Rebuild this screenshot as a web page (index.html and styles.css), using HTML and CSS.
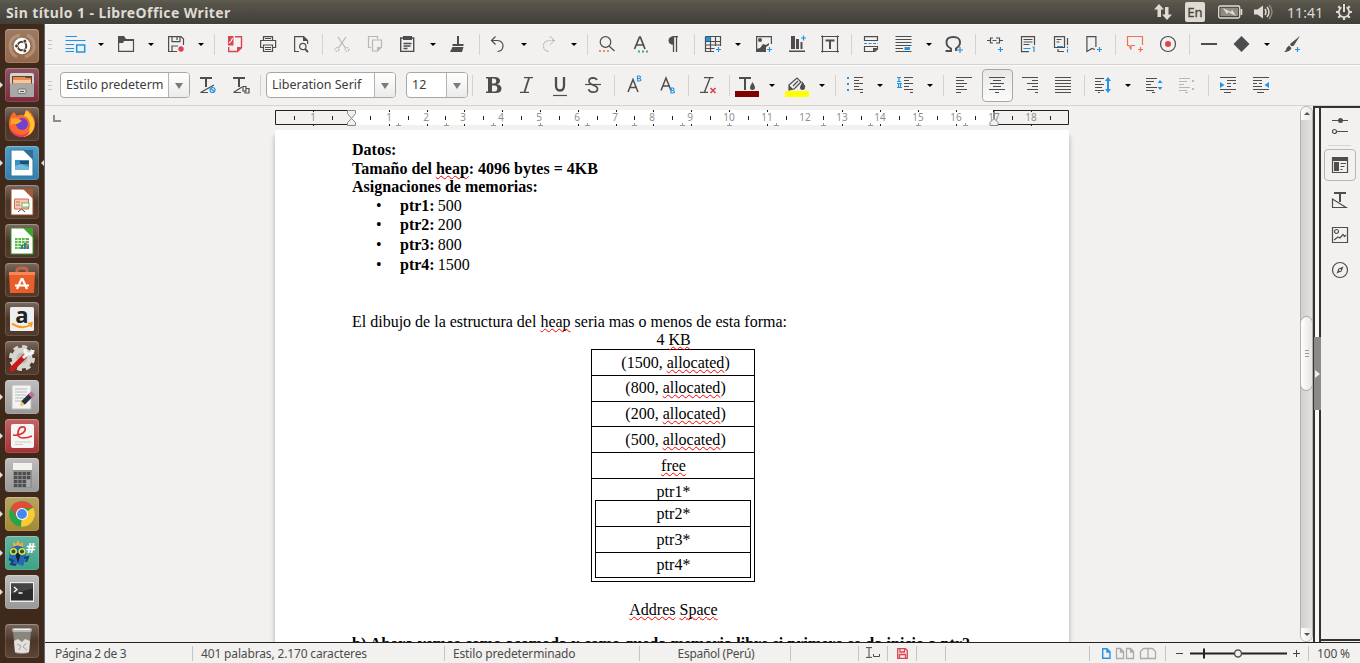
FILE: index.html
```html
<!DOCTYPE html>
<html lang="es">
<head>
<meta charset="utf-8">
<title>Sin título 1 - LibreOffice Writer</title>
<link rel="stylesheet" href="styles.css">
</head>
<body>
<header class="panel">
  <span class="title">Sin título 1 - LibreOffice Writer</span>
  <div class="tray">
    <svg class="t-net" width="18" height="16" viewBox="0 0 18 16"><path d="M5 0l5 5.500H7V13H3.500V5.500H0zM13 16l-5-5.500h3V3h3.500v7.500H18z"/></svg>
    <span class="lang">En</span>
    <svg class="t-bat" width="25" height="14" viewBox="0 0 25 14"><rect x=".7" y="1" width="21" height="12" rx="1.500" fill="none" stroke="#dfdbd2" stroke-width="1.300"/><rect x="2.500" y="3" width="17.500" height="8" fill="#8e8b82"/><path d="M22.500 4h1.800v6h-1.800z"/><path d="M5 3l8 4 1-2.500 4 6.500-8-4-1 2.500z"/></svg>
    <svg class="t-vol" width="20" height="16" viewBox="0 0 20 16"><path d="M0 5.500h3.500L9 1.500v13L3.500 10.500H0z"/><path d="M11 5q2 3 0 6M13 3q4 5 0 10" fill="none" stroke="#dfdbd2" stroke-width="1.500"/><path d="M15 1q6 7 0 14" fill="none" stroke="#8b897f" stroke-width="1.500"/></svg>
    <span class="clock">11:41</span>
    <svg class="t-gear" width="16" height="16" viewBox="0 0 16 16"><circle cx="8" cy="8" r="5.200" fill="none" stroke="#dfdbd2" stroke-width="1.800"/><path d="M0 8h3M13 8h3M2.300 2.300l2.200 2.200M13.700 2.300l-2.200 2.200M2.300 13.700l2.200-2.200M13.700 13.700l-2.200-2.200M8 13v3" stroke="#dfdbd2" stroke-width="2.200" fill="none"/><path d="M8 0v8" stroke="#4b4943" stroke-width="5" fill="none"/><path d="M8 0v8" stroke="#dfdbd2" stroke-width="2" fill="none"/></svg>
  </div>
</header>
<div class="desk">
<nav class="launcher">
  <div class="tile t-dash"><svg viewBox="0 0 34 34"><path d="M6 22Q2 9 15 6M28 12q4 12-8 16M12 28Q4 24 6 16M22 6q7 3 7 10" fill="none" stroke="#e0c9b5" stroke-width="3" opacity=".35"/><circle cx="17" cy="17" r="8.300" fill="#fff"/><circle cx="17" cy="17" r="4.300" fill="none" stroke="#51392a" stroke-width="2"/><g fill="#51392a" stroke="#fff" stroke-width=".8"><circle cx="11.500" cy="17" r="1.900"/><circle cx="19.800" cy="12.200" r="1.900"/><circle cx="19.800" cy="21.800" r="1.900"/></g></svg></div>
  <div class="tile t-files run"><svg viewBox="0 0 34 34"><rect x="5" y="5" width="24" height="24" rx="2" fill="#d5d3cf"/><path d="M7 8h20v8H7z" fill="#5c4335"/><path d="M8 9h12l1 1h5v6H8z" fill="#e88a4a"/><path d="M8 12h18v3H8z" fill="#f4c9a0"/><path d="M5 15.500h24V28q0 1-1 1H6q-1 0-1-1z" fill="#a9a8a6"/><rect x="13" y="21" width="8" height="4.500" rx="1" fill="#ddd" stroke="#777"/><path d="M15 23.500h4" stroke="#555"/></svg></div>
  <div class="tile t-plain"><svg viewBox="0 0 34 34"><path d="M4 15Q5 8 9 5l3 4q3-2 7-1l4-5q8 7 7 16-2 10-13 11Q5 29 4 18z" fill="#ff6a2a"/><path d="M21 3q10 8 8 18-3 8-11 9 8-6 7-13-1-7-6-8z" fill="#ffc52f"/><path d="M5 19q3 9 12 9 6-1 8-6-1 8-9 8Q6 29 5 19z" fill="#f2346b"/><circle cx="17" cy="17" r="6" fill="#7142cf"/><path d="M6 12q4-2 8 0l3 2-5 3q-4-1-6 1z" fill="#ffa52c"/></svg></div>
  <div class="tile t-writer run on"><svg viewBox="0 0 34 34"><path d="M6 4h13l9 9v17H6z" fill="#fff" stroke="#2879a4"/><path d="M18 4h10v10z" fill="#2f6d98"/><path d="M10 14h14v10H10z" fill="#3394c4"/><path d="M15 15h9v3h-9z" fill="#244f68"/><path d="M10 20l6-2 8 3v3H10z" fill="#72b8d7"/></svg></div>
  <div class="tile t-plain"><svg viewBox="0 0 34 34"><path d="M6 4h13l9 9v17H6z" fill="#fff" stroke="#8f4a28"/><path d="M18 4h10v10z" fill="#a55b36"/><path d="M9.500 14h14v10h-14z" fill="#f1c9b6" stroke="#cf6d48"/><path d="M11 17h4M11 20h4" stroke="#cf6d48"/><rect x="17" y="18" width="7" height="4" fill="#fff" stroke="#79ad60"/><path d="M13 27l3.500-3 3.500 3" stroke="#555" fill="none"/></svg></div>
  <div class="tile t-plain"><svg viewBox="0 0 34 34"><path d="M6 4h13l9 9v17H6z" fill="#fff" stroke="#36952c"/><path d="M18 4h10v10z" fill="#3fa52f"/><path d="M10 14h14v11H10z" fill="#5dbb3d"/><path d="M10 16.500h14M10 19.500h14M10 22.500h14M13 14v11M16.500 14v11M20 14v11" stroke="#fff" stroke-width=".8"/><path d="M17 25v-4M20 25v-6M23 25v-3" stroke="#2882a3" stroke-width="2"/><path d="M21.800 25v-7" stroke="#e55"/></svg></div>
  <div class="tile t-plain"><svg viewBox="0 0 34 34"><path d="M12 10V7q0-2 5-2t5 2v3" fill="none" stroke="#c56446" stroke-width="3"/><path d="M4 9h26l-1 21H5z" fill="#e95f2b"/><path d="M4 9h26v3H4z" fill="#f78758"/><path d="M12 26l4.500-10h1L22 26M10 22.500h14" fill="none" stroke="#fff" stroke-width="2.200"/></svg></div>
  <div class="tile t-plain"><svg viewBox="0 0 34 34"><rect x="5" y="5" width="24" height="24" rx="1.500" fill="#eee"/><text x="17" y="21" text-anchor="middle" class="amz">a</text><path d="M7 21.500q10 7 19 1" fill="none" stroke="#f79a1c" stroke-width="2"/><path d="M23 21.500l4-.5-1 4" fill="none" stroke="#f79a1c" stroke-width="1.500"/></svg></div>
  <div class="tile t-plain"><svg viewBox="0 0 34 34"><circle cx="17" cy="17" r="8" fill="#bdbab6" stroke="#d7d5d2" stroke-width="5"/><circle cx="17" cy="17" r="11.500" fill="none" stroke="#d7d5d2" stroke-width="3" stroke-dasharray="5 4"/><path d="M7 28L19 16" stroke="#c81818" stroke-width="5" stroke-linecap="round"/><path d="M18 17l5-5M20 8q0 5 3 5 5 0 5-4" fill="none" stroke="#f4f4f4" stroke-width="3"/></svg></div>
  <div class="tile t-gray run"><svg viewBox="0 0 34 34"><rect x="7" y="5" width="19" height="24" fill="#f3f3f1" stroke="#bbb"/><path d="M10 9h12M10 12h12M10 15h11M10 18h9M10 21h7" stroke="#bbb"/><path d="M18 23l8-8" stroke="#283040" stroke-width="5"/><path d="M15 26l1-5 4 4z" fill="#e8cc50"/><path d="M25 16l3-3" stroke="#c66ba0" stroke-width="5"/></svg></div>
  <div class="tile t-red run"><svg viewBox="0 0 34 34"><rect x="6" y="5" width="23" height="24" rx="2" fill="#f7f5f3"/><path d="M8 16q5 1 10-2 4-4 1-6-5-1-6 5-1 6 5 6 5 0 9-2" fill="none" stroke="#d8313a" stroke-width="1.700"/><path d="M10 23h16M10 25.500h8" stroke="#ccc"/></svg></div>
  <div class="tile t-gray run"><svg viewBox="0 0 34 34"><rect x="8" y="5" width="19" height="25" rx="1" fill="#8f8f8f"/><rect x="8" y="5" width="19" height="7" fill="#f2f2ef"/><path d="M9 15.500h17M9 19.500h17M9 23.500h17M9 27.500h17" stroke="#4c4c4c" stroke-width="2.800" stroke-dasharray="3.300 1"/><path d="M21.500 22h4v7h-4z" fill="#aaa"/></svg></div>
  <div class="tile t-gold run"><svg viewBox="0 0 34 34"><circle cx="17" cy="17" r="12.800" fill="#2ba24c"/><path d="M17 17l11.100-6.400A12.800 12.800 0 0 1 16 29.800z" fill="#fbcb35"/><path d="M5.900 10.600A12.800 12.800 0 0 1 28.100 10.600L28.300 11H17L12 20z" fill="#e14b3b"/><circle cx="17" cy="17" r="6" fill="#fff"/><circle cx="17" cy="17" r="4.900" fill="#4688ef"/></svg></div>
  <div class="tile t-teal run"><svg viewBox="0 0 34 34"><path d="M8 6l3 2 2-4 2 4 3-2v5H8z" fill="#e9ae42"/><path d="M5 13q8-7 15 0l1 8-3 9-5-2-5 2-1-5-3-2z" fill="#236bb7"/><path d="M4 23l4 2-2 3 5 1M19 22l4-1-2 5" fill="none" stroke="#173d77" stroke-width="2"/><path d="M10 17h6l-3 10z" fill="#151f2a"/><circle cx="8.500" cy="15.500" r="2.800" fill="#294f35" stroke="#dde13d" stroke-width="1.500"/><circle cx="17" cy="15.500" r="2.800" fill="#294f35" stroke="#dde13d" stroke-width="1.500"/><text x="21" y="17" class="hash">#</text></svg></div>
  <div class="tile t-gray run"><svg viewBox="0 0 34 34"><rect x="5" y="7" width="24" height="20" fill="#ececec"/><rect x="6" y="8.500" width="22" height="17" fill="#2b2b2b"/><path d="M6 8.500h22v5L6 19z" fill="#454545"/><path d="M9 12l3 2.500L9 17M13.500 18h4" fill="none" stroke="#fff" stroke-width="1.300"/></svg></div>
  <div class="tile t-trash"><svg viewBox="0 0 34 34"><path d="M8 7L26 7L24 29Q17 31 10 29Z" fill="#8b857f"/><path d="M9 17L13 15L17 18L20 15L25 17L24 28Q17 30 10 28Z" fill="#e2e1de"/><path d="M12 20L16 22L14 26M21 19L18 23L22 26" stroke="#a5a29e" fill="none"/><rect x="7" y="4" width="20" height="4" rx="2" fill="#b9b7b3"/><path d="M9 5.500h16" stroke="#eee"/></svg></div>
</nav>
<main class="app">
<div class="bar bar-1">
  <i class="grip"></i>
  <b class="btn drop wide"><svg class="ic" viewBox="0 0 16 16"><path class="b" d="M-2.500.500H9M-2.500 4.500h20M-2.500 8.500H6M-2.500 12.500H6M-2.500 15.500H6"/><rect class="b" x="8.700" y="9" width="8" height="7" stroke-width="1.500"/></svg></b>
  <b class="btn drop"><svg class="ic" viewBox="0 0 16 16"><path class="f" d="M0 0h6l2 3h8v2H6L5 7H0z"/><path class="k" d="M.600 4v11.400h14.900V3.600"/></svg></b>
  <b class="btn drop"><svg class="ic" viewBox="0 0 16 16"><path class="k" d="M9 15.500H.600V.600H13l2.500 2.500V9M4 .600v5h8v-5M9 1v3M4 15V10h6"/><circle cx="13" cy="13" r="2.700" fill="#da4453"/></svg></b>
  <i class="sep s9"></i>
  <b class="btn"><svg class="ic" viewBox="0 0 16 16"><path fill="none" stroke="#da4453" stroke-width="1.400" d="M8 .700h6.500v11l-4 3.800H1.700V11"/><path fill="#da4453" d="M1 0h5.500v9.500H1z"/><path fill="#da4453" d="M10 16v-5h5z"/><path d="M2 7Q5 5 5.500 2" fill="none" stroke="#fff"/></svg></b>
  <b class="btn"><svg class="ic" viewBox="0 0 16 16"><path class="k" d="M3.500 4V.600h9V4M3 11.500H.600v-7h15v7H13M5 2.500h6M3.500 9h9v6.500h-9zM5 11.500h6M5 13.500h6"/></svg></b>
  <b class="btn"><svg class="ic" viewBox="0 0 16 16"><path class="k" d="M6 15.500H1.600V.600h9l4 4V8"/><path class="f" d="M10 0v5h5z"/><circle class="k" cx="9.800" cy="10.500" r="3.200"/><path class="k" d="M12 13l3 3" stroke-width="1.800"/></svg></b>
  <i class="sep"></i>
  <b class="btn dim"><svg class="ic" viewBox="0 0 16 16"><path class="k" d="M4 1l7.500 11M12 1L4.500 12"/><circle class="k" cx="3" cy="13.500" r="1.900" stroke-dasharray="1.500 1"/><circle class="k" cx="13" cy="13.500" r="1.900" stroke-dasharray="1.500 1"/></svg></b>
  <b class="btn dim"><svg class="ic" viewBox="0 0 16 16"><path class="k" d="M4 11.500H1.500v-11h9V3M5.500 4h9v7l-4 4h-5z"/><path class="f" d="M10 16v-5h5z"/></svg></b>
  <b class="btn drop"><svg class="ic" viewBox="0 0 16 16"><path class="k" d="M.700 2h13v13.400H.700zM3.500 7.500h8M3.500 10h7M3.500 12.500h4" stroke-width="1.400"/><path class="f" d="M3 0h9v4H3z"/></svg></b>
  <b class="btn"><svg class="ic" viewBox="0 0 16 16"><path class="f" d="M7 0h2v8h4.500v2h-11V8H7zM2.500 11h11L12 16H0z"/></svg></b>
  <i class="sep"></i>
  <b class="btn drop"><svg class="ic" viewBox="0 0 16 16"><path class="k" d="M4.500.500L.500 4.500l4 4M1 4.500h5.500q5.500.500 5.500 5.500 0 5-5.500 5.500"/></svg></b>
  <b class="btn drop dim"><svg class="ic" viewBox="0 0 16 16"><path class="k" d="M9 .500l4.500 4L9 8.500M13 4.500H8Q2.500 5 2.500 10q0 5 5.500 5.500" stroke-dasharray="2 .800"/></svg></b>
  <i class="sep"></i>
  <b class="btn"><svg class="ic" viewBox="0 0 16 16"><circle class="k" cx="6.500" cy="6" r="5.300"/><path class="k" d="M10 10l5.500 5"/><path d="M0 15H11" stroke="#ef8b70" stroke-width="2" stroke-dasharray="2 2"/></svg></b>
  <b class="btn"><svg class="ic" viewBox="0 0 16 16"><path class="k" d="M2.500 13L7.500 1h.800L13 13M4.500 9h7" stroke-width="1.700"/><path d="M6 15.500h10" stroke="#3fae70" stroke-width="2" stroke-dasharray="2 2"/></svg></b>
  <b class="btn"><svg class="ic" viewBox="0 0 16 16"><path class="f" d="M9 0v9Q3.500 8.500 3.500 4.500T9 0z"/><path class="k" d="M8.500 0v16M11.500 0v16M8 .600h5" stroke-width="1.300"/></svg></b>
  <i class="sep s7"></i>
  <b class="btn drop w51"><svg class="ic" viewBox="0 0 16 16"><path class="k" d="M.500.500h15V10M.500.500v15H9M.500 5.500h15M.500 9h15M.500 12.500h9M5.500.500v15M10.500.500V10"/><path class="bf" d="M1 1h4.500v4H1z"/><path class="b" d="M13.500 11v5M11 13.500h5"/></svg></b>
  <b class="btn"><svg class="ic" viewBox="0 0 16 16"><path class="k" d="M.600 0v15.400H9M0 .600h15.400V8"/><circle class="f" cx="4" cy="4" r="2"/><path class="f" d="M0 16v-3l4-1 3-4 3 1 3-2v2l-3 2v5z"/><path class="b" d="M13.500 11v5M11 13.500h5"/></svg></b>
  <b class="btn"><svg class="ic" viewBox="0 0 16 16"><path class="f" d="M2 0h4v13H2zM7 3h3v10H7zM11.500 6h2v7h-2zM0 14.500h16V16H0z"/><path class="b" d="M14.500-.500v5M12 2h5"/></svg></b>
  <b class="btn"><svg class="ic" viewBox="0 0 16 16"><path class="k" d="M.500-.500v17M15.500-.500v17M-1 .500h18M-1 15.500h18"/><path class="f" d="M3.500 3.500h9v2H9V13H7V5.500H3.500z"/></svg></b>
  <i class="sep"></i>
  <b class="btn"><svg class="ic" viewBox="0 0 16 16"><path class="k" d="M1.500 0v4.500h13V0M1 .600h14M1.500 16v-5.500h13V13l-2.500 2.500H1.500"/><path class="f" d="M10 16v-4h5z"/><path class="b" d="M1 7.500h14" stroke-dasharray="3 1.500"/></svg></b>
  <b class="btn drop"><svg class="ic" viewBox="0 0 16 16"><path class="k" d="M-.5.500h16M-.5 3.500h16M-.5 6.500h16M-.5 9.500h16M-.5 12.500H7M-.5 15.500h16"/><path class="bf" d="M8.500 11H14v3H8.500z"/></svg></b>
  <b class="btn"><svg class="ic" viewBox="0 0 16 16"><path class="k" d="M-.5 15H5v-2.500Q.500 10.500.500 6.500.500 1 7.300 1T14 6.500Q14 10 10 12.500V15" stroke-width="1.900"/><path class="b" d="M14 11v6M11 14h6"/></svg></b>
  <i class="sep"></i>
  <b class="btn"><svg class="ic" viewBox="0 0 16 16"><path class="k" d="M0 4.500h4M12 4.500h4M6 2H3.500v5H6M9 2h3.500v5H9M5.500 4.500h4"/><path class="b" d="M13.500 11v5M11 13.500h5"/></svg></b>
  <b class="btn"><svg class="ic" viewBox="0 0 16 16"><path class="k" d="M14.500 9V.600h-13v15H9M3.500 3.500h9M3.500 6h9M3.500 8.500h6"/><path class="b" d="M3.500 12.500h7M12.500 11h1.500v5"/></svg></b>
  <b class="btn"><svg class="ic" viewBox="0 0 16 16"><path class="k" d="M11.500 11.500h-10V.600h10zM3.500 3.500h5M3.500 6h3M14.500 2v7M5 13v2.500h6"/><path class="b" d="M4 10.500h6M14.500 10.500v1.500M14.500 13v3.500"/></svg></b>
  <b class="btn"><svg class="ic" viewBox="0 0 16 16"><path class="k" d="M9 13.500L6 12.500.900 15.500V.600h9V11"/><path class="b" d="M13.500 11v5M11 13.500h5"/></svg></b>
  <i class="sep"></i>
  <b class="btn"><svg class="ic" viewBox="0 0 16 16"><path class="o" d="M8 9.500H4v4L2 9.500H.500v-9h15V9"/><path class="o" d="M13.500 11v5M11 13.500h5"/></svg></b>
  <b class="btn"><svg class="ic" viewBox="0 0 16 16"><circle class="k" cx="8" cy="8" r="7.500"/><circle cx="8" cy="8" r="3" fill="#da4453"/></svg></b>
  <i class="sep"></i>
  <b class="btn"><svg class="ic" viewBox="0 0 16 16"><path class="f" d="M0 7h16v2H0z"/></svg></b>
  <b class="btn drop"><svg class="ic" viewBox="0 0 16 16"><path class="f" d="M7.500 0l8 8-8 8-8-8z"/></svg></b>
  <b class="btn"><svg class="ic" viewBox="0 0 16 16"><path class="f" d="M16 0L9.500 10H7L6 8zM5 9.500l2.500 2.500Q6 16 0 16q3-2 2.500-4z"/><path class="b" d="M13.500 11v5M11 13.500h5"/></svg></b>
</div>
<div class="bar bar-2">
  <i class="grip"></i>
  <div class="combo c-style"><span>Estilo predeterm</span><i></i></div>
  <b class="btn"><svg class="ic" viewBox="0 0 16 16"><path class="f" d="M1 0h12v2H8v8H6V2H1z"/><path class="k" d="M1.500 15.500L15 8M1.500 15.500H9"/><circle class="b" cx="13.500" cy="13" r="2.500"/><path class="b" d="M12 11.500l3 3"/></svg></b>
  <b class="btn"><svg class="ic" viewBox="0 0 16 16"><path class="f" d="M1 0h12v2H8v8H6V2H1z"/><path class="k" d="M1.500 15.500L10 10M1.500 15.500H9M11 9.500h3V14h-3zM14 11.500h3V16h-4v-2"/></svg></b>
  <i class="sep g2"></i>
  <div class="combo c-font"><span>Liberation Serif</span><i></i></div>
  <div class="combo c-size"><span>12</span><i></i></div>
  <i class="sep g3"></i>
  <b class="btn"><svg class="ic" viewBox="0 0 16 16"><path class="f" fill-rule="evenodd" d="M0 0h8.500q5.500.300 5.500 3.800Q14 6.500 11 7.300q4.500.700 4.500 4.200Q15.500 16 9.500 16H0v-1.500h2V1.500H0zM6 1.500v5h2q2.300 0 2.300-2.500T8 1.500zM6 8.500v6h2.500q2.800 0 2.800-3t-2.800-3z"/></svg></b>
  <b class="btn"><svg class="ic" viewBox="0 0 16 16"><path class="k" d="M5 .600h9M1 15.400h9"/><path class="k" d="M10 1L5.500 15" stroke-width="1.800"/></svg></b>
  <b class="btn"><svg class="ic" viewBox="0 0 16 16"><path class="k" d="M4 0v8.500q0 5 4 5t4-5V0" stroke-width="2.300"/><path class="k" d="M1 18.500h14"/></svg></b>
  <b class="btn"><svg class="ic" viewBox="0 0 16 16"><path class="k" d="M12 3Q11 .800 8 .800q-4 .200-4 3.200 0 2.500 4 4 4.500 1.500 4.500 4 0 3-4.500 3.200-3.500 0-4.500-3" stroke-width="1.700"/><path class="k" d="M0 7.500h16"/></svg></b>
  <i class="sep"></i>
  <b class="btn"><svg class="ic" viewBox="0 0 16 16"><path class="k" d="M2 15L7 2.500 12 15M3.500 10.500h7" stroke-width="1.500"/><path class="b" d="M11.500 1.500V-1h2q2 1 0 2.500h-2V4h2q3-1 0-2.500"/></svg></b>
  <b class="btn"><svg class="ic" viewBox="0 0 16 16"><path class="k" d="M2 13.500L7 1l5 12.500M3.500 9h7" stroke-width="1.500"/><path class="b" d="M12 13.500V11h2q2 1 0 2.500h-2V16h2q3-1 0-2.500"/></svg></b>
  <i class="sep"></i>
  <b class="btn"><svg class="ic" viewBox="0 0 16 16"><path class="k" d="M4 .600h9.500M0 15.400h8M10 1L4.500 15" stroke-width="1.400"/><path d="M10.500 11l5 5M15.500 11l-5 5" stroke="#da4453" stroke-width="1.700"/></svg></b>
  <i class="sep s6"></i>
  <b class="btn drop"><svg class="ic" viewBox="0 0 16 16"><path class="f" d="M0 0h12v2H7v11H5V2H0zM13.500 5q5 8 0 8t0-8z"/><path d="M-4 14h24v6H-4z" fill="#800000"/></svg></b>
  <b class="btn drop"><svg class="ic" viewBox="0 0 16 16"><path class="k" d="M0 8l8-7 4 4-7 7-5 1zM4 9l5-5M6 11l5-5M13 5l3 5"/><path class="f" d="M13.500 5q5 8 0 8t0-8zM0 12v-4l4 4z"/><path d="M-4 14h24v6H-4z" fill="#ff0"/></svg></b>
  <i class="sep"></i>
  <b class="btn drop"><svg class="ic" viewBox="0 0 16 16"><path class="bf" d="M0 0h2v2H0zM0 6h2v2H0zM0 12h2v2H0z"/><path class="k" d="M7 .500h9M7 3.500h5M7 6.500h9M7 9.500h5M7 12.500h9M13 15.500h3"/></svg></b>
  <b class="btn drop"><svg class="ic" viewBox="0 0 16 16"><path class="b" d="M0 .500h4M0 4.500h4M2 0v4M0 6.500h5M0 10.500h5M1.500 6v4M3.500 6v4"/><path class="k" d="M7 .500h9M7 3.500h5M7 6.500h9M7 9.500h5M7 12.500h9M13 15.500h3"/></svg></b>
  <i class="sep s9"></i>
  <b class="btn"><svg class="ic" viewBox="0 0 16 16"><path class="k" d="M0 .500h16M0 3.500h8M0 6.500h11M0 9.500h8M0 12.500h11M0 15.500h5"/></svg></b>
  <b class="btn on"><svg class="ic" viewBox="0 0 16 16"><path class="k" d="M0 .500h16M4 3.500h8M1 6.500h14M4 9.500h8M0 12.500h16M6 15.500h4"/></svg></b>
  <b class="btn"><svg class="ic" viewBox="0 0 16 16"><path class="k" d="M0 .500h16M10 3.500h6M5 6.500h11M10 9.500h6M5 12.500h11M13 15.500h3"/></svg></b>
  <b class="btn"><svg class="ic" viewBox="0 0 16 16"><path class="k" d="M0 .500h16M0 3.500h16M0 6.500h16M0 9.500h16M0 12.500h16M0 15.500h16"/></svg></b>
  <i class="sep s7"></i>
  <b class="btn drop w51"><svg class="ic" viewBox="0 0 16 16"><path class="k" d="M0 1.500h9M0 4.500h6M0 7.500h9M0 10.500h7M0 13.500h9M3 15.500h2"/><path class="b" d="M13 3v10" stroke-width="2"/><path class="bf" d="M10 4l3-4 3 4zM10 12l3 4 3-4z"/></svg></b>
  <b class="btn"><svg class="ic" viewBox="0 0 16 16"><path class="k" d="M0 1.500h11M0 4.500h8M0 7.500h5M0 10.500h11M0 13.500h8M6 15.500h3"/><path class="bf" d="M11.500 6l2.500-3 2.500 3zM11.500 10l2.500 3 2.500-3z"/></svg></b>
  <b class="btn dim"><svg class="ic" viewBox="0 0 16 16"><path class="k" d="M0 1.500h11M0 4.500h8M0 7.500h5M0 10.500h11M0 13.500h8M6 15.500h3"/><path class="f" d="M13 3h2v2h-2zM13 11h2v2h-2z"/></svg></b>
  <i class="sep"></i>
  <b class="btn"><svg class="ic" viewBox="0 0 16 16"><path class="k" d="M0 .500h16M7 3.500h9M7 6.500h4M13 6.500h3M7 9.500h4M0 12.500h16M4 15.500h7"/><path class="bf" d="M0 5l4.500 3L0 11z"/></svg></b>
  <b class="btn"><svg class="ic" viewBox="0 0 16 16"><path class="k" d="M0 .500h16M0 3.500h9M0 6.500h4M6 6.500h3M0 9.500h9M0 12.500h16M4 15.500h7"/><path class="bf" d="M16 5l-4.500 3 4.500 3z"/></svg></b>
</div>
<div class="work">
  <section class="doc">
    <div class="ruler">
      <svg class="tabsel" width="8" height="8" viewBox="0 0 8 8"><path d="M1 1v6h7" fill="none" stroke="#8c8c8c" stroke-width="2"/></svg>
      <svg class="scale" width="796" height="24" viewBox="0 0 796 24">
        <rect x="76" y="4" width="643" height="15" fill="#fff"/>
        <path d="M76 4.500H.500v14H76M719 18.500V4.500h74.500v14H719" fill="none" stroke="#222"/>
        <g fill="none" stroke="#222" shape-rendering="crispEdges">
          <path d="M19.200 11.500H790" stroke-width="4" stroke-dasharray="1 36.800"/>
          <path d="M38.100 5H790M38.100 19H790" stroke-width="2" stroke-dasharray="1 36.800"/>
        </g>
        <g fill="none" stroke="#999" shape-rendering="crispEdges"><path d="M123.300 18H700" stroke-width="3" stroke-dasharray="1 46.200"/><path d="M121.300 19.500H700" stroke-dasharray="5 42.200"/></g>
        <g class="nums">
          <text x="38">1</text><text x="114">1</text><text x="151">2</text><text x="188">3</text><text x="226">4</text><text x="264">5</text><text x="302">6</text><text x="340">7</text><text x="377">8</text><text x="415">9</text><text x="454">10</text><text x="492">11</text><text x="530">12</text><text x="567">13</text><text x="605">14</text><text x="643">15</text><text x="681">16</text><text x="719">17</text><text x="756">18</text>
        </g>
        <g fill="#f2f1f0" stroke="#888"><path d="M72.500 4.500h8v3l-4 5-4-5zM76.500 12.500l4 4v3h-8v-3zM719 12.500l4 4v3h-8v-3z"/></g>
      </svg>
    </div>
    <article class="page">
      <p class="h19"><b>Datos:</b></p>
      <p><b>Tamaño del <u>heap</u>: 4096 bytes = 4KB</b></p>
      <p class="h19"><b>Asignaciones de memorias:</b></p>
      <ul>
        <li class="h19"><b>ptr1:</b> 500</li>
        <li><b>ptr2:</b> 200</li>
        <li><b>ptr3:</b> 800</li>
        <li><b>ptr4:</b> 1500</li>
      </ul>
      <p class="intro">El dibujo de la estructura del <u>heap</u> seria mas o menos de esta forma:</p>
      <p class="center">4 <u>KB</u></p>
      <div class="heap">
        <div class="cell in">(1500, <u>allocated</u>)</div>
        <div class="cell in high">(800, <u>allocated</u>)</div>
        <div class="cell in short">(200, <u>allocated</u>)</div>
        <div class="cell in">(500, <u>allocated</u>)</div>
        <div class="cell"><u>free</u></div>
        <div class="cell last">ptr1*
          <div class="inner">
            <div class="cell">ptr2*</div>
            <div class="cell">ptr3*</div>
            <div class="cell short">ptr4*</div>
          </div>
        </div>
      </div>
      <p class="center foot"><u>Addres</u> <u>Space</u></p>
      <p class="next"><b>b) Ahora vemos como acomoda y como queda memoria libre si primero se da inicio a ptr?</b></p>
    </article>
  </section>
  <div class="scroll"><i class="up"></i><i class="thumb"></i><i class="down"></i></div>
  <div class="split"><i></i></div>
  <aside class="side">
    <svg class="ic set" viewBox="0 0 16 16"><path class="k" d="M0 2.500h16M5 13.500h11"/><circle class="f" cx="8.500" cy="2.500" r="2.500"/><circle class="k" cx="2.500" cy="13.500" r="2"/></svg>
    <hr>
    <div class="deck on"><svg class="ic" viewBox="0 0 16 16"><path class="k" d="M.500.500h15v15H.500zM8.500 6.500H14M8.500 9.500h4M8.500 12.500h2"/><path class="f" d="M0 0h16v4H0zM2 5h5v9H2z"/></svg></div>
    <div class="deck"><svg class="ic" viewBox="0 0 16 16"><path class="f" d="M2 0h12v2H9v8H7V2H2z"/><path class="k" d="M.500 7v8.500H14z"/></svg></div>
    <div class="deck"><svg class="ic" viewBox="0 0 16 16"><path class="k" d="M.500.500h15v15H.500zM2 13l4-3 2 1 3-3.500 1.500 2L14 8"/><circle class="k" cx="4.500" cy="4.500" r="2"/></svg></div>
    <div class="deck"><svg class="ic" viewBox="0 0 16 16"><circle class="k" cx="8" cy="8" r="7.500"/><path class="f" d="M11.500 4.500l-2 5-5 2 2-5z"/><circle cx="8" cy="8" r="1" fill="#f2f1f0"/></svg></div>
  </aside>
</div>
<footer class="status">
  <span class="s-page">Página 2 de 3</span>
  <span class="s-words">401 palabras, 2.170 caracteres</span>
  <span class="s-style">Estilo predeterminado</span>
  <span class="mid s-lang">Español (Perú)</span>
  <span></span>
  <span class="mid"><svg width="16" height="12" viewBox="0 0 16 12"><path class="k" d="M1 .600h6M1 10.400h6M4 .600v10M8.500 7v2.500h6V7"/></svg></span>
  <span class="mid"><svg width="11" height="11" viewBox="0 0 11 11"><path d="M.700.700h7.800l1.800 1.800v7.800H.700zM3 1v3h4.500V1M2.500 10V6.500h6V10" fill="none" stroke="#da4453" stroke-width="1.300"/></svg></span>
  <span></span>
  <span></span>
  <span class="s-view"><svg width="56" height="11" viewBox="0 0 56 11"><path d="M.700.700H5l3 3v6.600H.700zM5 1v3h3" fill="none" stroke="#1e95ea" stroke-width="1.400"/><path d="M14.500.500h4l3 3v7h-7zM18.500 1v3h3M24.500.500h4l3 3v7h-7zM28.500 1v3h3M38.500 10.500v-7l3-3h4.500v10zM46 10.500V.500h4.500l3 3v7z" fill="none" stroke="#aaa" stroke-width="1.300"/></svg></span>
  <span class="s-zoom"><svg width="126" height="11" viewBox="0 0 126 11"><path d="M0 5.500h7M117 5.500h7M120.500 2v7" stroke="#444"/><path d="M14 5.500h97M28 .500v10" stroke="#222" stroke-width="2"/><circle cx="62" cy="5.500" r="3.500" fill="#f2f1f0" stroke="#555" stroke-width="1.500"/></svg></span>
  <span class="s-pct">100 %</span>
</footer>
</main>
</div>
</body>
</html>
```
FILE: styles.css
```css
* { box-sizing: border-box; }
body { margin: 0; width: 1360px; height: 663px; overflow: hidden; display: flex; flex-direction: column; background: #f2f1f0; font: 12.5px "Noto Sans", "Open Sans", sans-serif; color: #4c4c4c; }
i { font-style: normal; display: block; }
svg { display: block; overflow: visible; }

/* top panel */
.panel { height: 24px; flex: none; display: flex; justify-content: space-between; align-items: center; padding: 0 8px 0 6px; background: linear-gradient(#5f5c4f, #57544b 15%, #3f3e39); color: #dfdbd2; }
.title { font-weight: 700; font-size: 14px; letter-spacing: .4px; }
.tray { display: flex; align-items: center; }
.tray svg { fill: #dfdbd2; }
.lang { width: 20px; height: 20px; margin: 0 13px; border-radius: 2px; background: #dfdbd2; color: #47453f; font-size: 13px; line-height: 20px; text-align: center; -webkit-text-stroke: .3px #47453f; }
.t-vol { margin: 0 13px 0 11px; }
.clock { width: 36px; font-size: 14px; letter-spacing: .1px; margin-right: 13px; }

/* launcher */
.desk { display: flex; flex: 1; min-height: 0; }
.launcher { width: 45px; flex: none; display: flex; flex-direction: column; gap: 5px; padding: 5px; background: #3f291a; border-right: 1px solid #646b76; }
.tile { width: 34px; height: 34px; flex: none; position: relative; border-radius: 4px; box-shadow: inset 0 0 0 1px #ffffff20, inset 0 1px 1px #ffffff30; }
.tile svg { width: 34px; height: 34px; }
.t-dash { background: linear-gradient(#9c7a62, #95684a); }
.t-files { background: linear-gradient(#8d5560, #7c2b3c); }
.t-plain { background: linear-gradient(#7b6a60, #4d3526 50%, #523b2d); }
.t-writer { background: linear-gradient(#539bc0, #347fab); }
.t-gray { background: linear-gradient(#bebebe, #989898); }
.t-red { background: linear-gradient(#c26464, #a43236); }
.t-gold { background: linear-gradient(#b8a565, #a4892f); }
.t-teal { background: linear-gradient(#63b49d, #3da387); }
.t-trash { margin-top: 10px; background: linear-gradient(#75655b, #4d3526 50%, #5c4537); }
.run::before, .on.tile::after { content: ""; position: absolute; top: 14px; border: 3px solid transparent; }
.run::before { left: -5px; border-left-color: #ddd; border-right: 0; }
.on.tile::after { right: -5px; border-right-color: #ddd; border-left: 0; }
.amz { font: 700 22px "Open Sans", sans-serif; fill: #222; }
.hash { font: 700 15px "Open Sans", sans-serif; fill: #fff; }

/* toolbars */
.app { flex: 1; display: flex; flex-direction: column; min-width: 0; }
.bar { height: 41px; flex: none; display: flex; align-items: center; border-bottom: 1px solid #d5d3d1; box-shadow: inset 0 1px #fafafa; }
.grip { width: 4px; height: 9px; margin: 0 8px 0 3px; background: repeating-linear-gradient(#c6c4c2 0 1px, transparent 1px 4px); }
.btn { width: 33px; height: 33px; flex: none; padding-left: 8px; display: flex; align-items: center; position: relative; }
.drop { width: 50px; }
.w51 { width: 51px; }
.drop::after { content: ""; margin-left: 14px; border: 3px solid transparent; border-top-color: #000; border-bottom: 0; }
.ic { width: 16px; height: 16px; flex: none; stroke-width: 1.2; }
.k { fill: none; stroke: #4d4d4d; }
.f { fill: #4d4d4d; }
.b { fill: none; stroke: #1e95ea; }
.bf { fill: #1e95ea; }
.o { fill: none; stroke: #f0704f; }
.dim .ic { opacity: .35; }
.sep { width: 8px; height: 21px; flex: none; background: linear-gradient(#d4d2d0, #d4d2d0) 4px 0 / 1px 100% no-repeat; }
.s9 { width: 9px; }
.s7 { width: 7px; }
.s6 { width: 6px; }
.btn.on::before { content: ""; position: absolute; inset: 0 1px; z-index: 0; border: 1px solid #aaa7a3; border-radius: 4px; background: linear-gradient(#e9e8e7, #fbfbfb); }
.btn.on .ic { position: relative; }
.combo { height: 26px; flex: none; display: flex; border: 1px solid #aaa7a2; border-radius: 4px; background: #fff; color: #3c3c3c; overflow: hidden; }
.combo span { flex: 1; padding-left: 5px; line-height: 24px; white-space: nowrap; overflow: hidden; }
.combo i { width: 21px; border-left: 1px solid #b7b4b0; background: linear-gradient(#fff, #ecebea); display: flex; align-items: center; justify-content: center; }
.combo i::after { content: ""; border: 4px solid transparent; border-top: 6px solid #7b7b7b; border-bottom: 0; margin-top: 2px; }
.c-style { width: 130px; margin-right: 1px; }
.c-font { width: 130px; margin-right: 10px; }
.c-size { width: 62px; }
.sep.g2 { margin-left: -1px; width: 10px; }
.sep.g3 { width: 10px; }

/* document area */
.work { height: 536px; flex: none; display: flex; }
.doc { width: 1255px; flex: none; overflow: hidden; }
.ruler { height: 24px; display: flex; padding-left: 8px; }
.tabsel { margin: 8px 214px 0 0; }
.nums text { font: 10px "Noto Sans", sans-serif; fill: #8f8f8f; text-anchor: middle; transform: translateY(15px); }
.page { width: 794px; height: 512px; margin-left: 230px; padding: 11px 76px 0 77px; background: #fff; box-shadow: 0 6px 5px #00000048; color: #000; font: 16px/18px "Liberation Serif", serif; }
.page p { margin: 0; height: 18px; white-space: nowrap; }
.page .h19 { height: 19px; }
.page u { text-decoration: underline wavy #f00 1px; text-underline-offset: 1px; text-decoration-skip-ink: none; }
.page ul { margin: 0; padding: 0; list-style: none; }
.page li { height: 20px; display: flex; gap: 3px; }
.page li::before { content: "•"; width: 21px; margin-left: 24px; }
.page p.intro { margin-top: 37px; }
.page p.center { text-align: center; padding-left: 2px; }
.heap { width: 164px; height: 233px; margin-left: 239px; border: 1px solid #000; text-align: center; }
.cell { height: 26px; padding: 4px 0 0 1px; border-bottom: 1px solid #000; white-space: nowrap; }
.heap > .cell.in { padding-left: 5px; }
.heap > .cell.high { padding-top: 3px; }
.cell.short { height: 25px; padding-top: 3px; }
.heap > .cell.last { height: auto; padding: 4px 3px 0; border: 0; text-indent: 1px; }
.inner { height: 78px; margin-top: -1px; border: 1px solid #000; text-indent: 0; }
.inner > .cell:last-child { border-bottom: 0; height: 25px; }
.page p.foot { margin-top: 19px; }
.page p.next { margin-top: 16px; width: 618px; text-align-last: justify; }

.scroll { width: 13px; flex: none; display: flex; flex-direction: column; border: 1px solid #b4b1ad; border-radius: 7px; background: linear-gradient(90deg, #d2d0cd, #e3e1df); overflow: hidden; }
.scroll i { flex: none; background: linear-gradient(90deg, #fff, #e6e5e3); display: flex; align-items: center; justify-content: center; }
.up, .down { height: 13px; }
.up::after, .down::after { content: ""; border: 3px solid transparent; }
.up::after { border-bottom-color: #555; border-top: 0; }
.down::after { border-top-color: #555; border-bottom: 0; }
.scroll .thumb { height: 75px; margin: 196px -1px auto; border: 1px solid #aaa7a3; border-radius: 7px; }
.thumb::after { content: ""; width: 4px; height: 7px; background: repeating-linear-gradient(#999 0 1px, transparent 1px 3px); }
.split { width: 8px; flex: none; display: flex; flex-direction: column; border: solid #333230; border-width: 2px 2px 0; background: #f7f7f7; }
.split i { height: 73px; margin: 229px -2px 0 -1px; background: #8b8a88; display: flex; align-items: center; justify-content: center; }
.split i::after { content: ""; border: 4px solid transparent; border-left: 5px solid #eee; border-right: 0; }
.side { flex: 1; display: flex; flex-direction: column; align-items: center; border: solid #333230; border-width: 2px 0; height: 535px; padding: 10px 2px 0 0; }
.side hr { width: 23px; height: 1px; margin: 11px 0 3px; border: 0; background: #d8d6d4; flex: none; }
.deck { width: 32px; height: 32px; flex: none; margin-bottom: 3px; display: flex; align-items: center; justify-content: center; border: 1px solid transparent; border-radius: 4px; }
.deck.on { border-color: #b9b6b2; }

/* status bar */
.status { flex: 1; display: grid; grid-template-columns: 148px 252px 195px 151px 68px 29px 29px 29px 144px 76px 143px 51px; align-items: center; border-top: 1px solid #222; font-size: 12px; letter-spacing: -.15px; position: relative; z-index: 1; background: #f2f1f0; }
.status span { height: 15px; display: flex; align-items: center; border-right: 1px solid #c6c4c2; padding-left: 8px; white-space: nowrap; }
.status .s-page { padding-left: 10px; letter-spacing: -.35px; }
.status .mid { padding: 0; justify-content: center; }
.status .s-lang { padding-left: 2px; letter-spacing: -.3px; }
.status .s-view { padding-left: 12px; }
.status .s-zoom { padding-left: 10px; }
.status .s-pct { border: 0; }
```
